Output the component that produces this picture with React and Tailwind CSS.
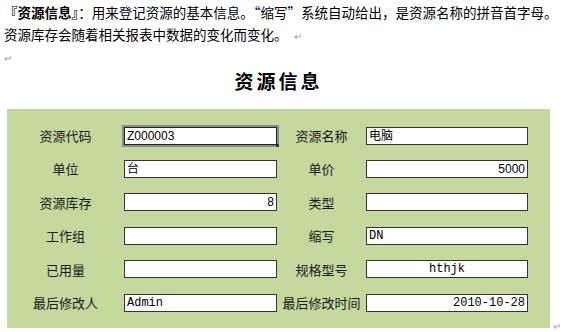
import React from 'react';

const cjk = { fontFamily: '"Noto Sans CJK SC", "Noto Sans", sans-serif' };
const mono = { fontFamily: '"Liberation Mono", "Noto Sans CJK SC", monospace' };

function Field({ value = '', align = 'left', focused = false, font = 'mono' }) {
    const base = focused
        ? 'border border-[#222] outline outline-2 outline-[#8a8a8a] relative'
        : 'border border-[#333]';
    return (
        <div
            className={`h-[18px] bg-white flex items-center px-[2px] text-[12px] text-black leading-none ${base} ${
                align === 'right' ? 'justify-end' : align === 'center' ? 'justify-center' : 'justify-start'
            }`}
            style={font === 'sans' ? { fontFamily: '"Liberation Sans", "Noto Sans CJK SC", sans-serif' } : mono}
        >
            {value}
            {focused && <span className="absolute right-[-3px] bottom-[-3px] w-[3px] h-[3px] bg-[#333]" />}
        </div>
    );
}

const rows = [
    [{ label: '资源代码', value: 'Z000003', focused: true, font: 'sans' }, { label: '资源名称', value: '电脑', font: 'sans' }],
    [{ label: '单位', value: '台', font: 'sans' }, { label: '单价', value: '5000', align: 'right', font: 'sans' }],
    [{ label: '资源库存', value: '8', align: 'right', font: 'sans' }, { label: '类型', value: '' }],
    [{ label: '工作组', value: '' }, { label: '缩写', value: 'DN' }],
    [{ label: '已用量', value: '' }, { label: '规格型号', value: 'hthjk', align: 'center' }],
    [{ label: '最后修改人', value: 'Admin' }, { label: '最后修改时间', value: '2010-10-28', align: 'right' }],
];

export default function App() {
    return (
        <div className="w-[564px] h-[332px] bg-white overflow-hidden text-black" style={cjk}>
            {/* 说明文字 */}
            <div className="pl-[4px] pt-[1px] text-[13.5px] leading-[22px] whitespace-nowrap">
                <p>
                    <span className="font-bold">『资源信息』</span>：用来登记资源的基本信息。“缩写”系统自动给出，是资源名称的拼音首字母。
                </p>
                <p>
                    资源库存会随着相关报表中数据的变化而变化。<span className="text-[10px] text-gray-400 ml-[6px]">↵</span>
                </p>
                <p className="text-[10px] text-gray-400">↵</p>
            </div>

            {/* 标题 */}
            <div className="w-[543px] ml-[7px] text-center text-[19px] font-bold tracking-[3px] leading-[24px]">
                资源信息
            </div>

            <div className="flex items-end">
                {/* 表单面板 */}
                <div className="w-[543px] h-[219px] ml-[7px] mt-[16px] bg-[#c5d89e] pt-[10px]">
                    {rows.map((row, i) => (
                        <div key={i} className="flex items-center h-[33.4px]">
                            <div className="w-[117px] text-center text-[13px] text-[#1a1a1a]">{row[0].label}</div>
                            <div className="w-[153px]">
                                <Field {...row[0]} />
                            </div>
                            <div className="w-[89px] text-center text-[13px] text-[#1a1a1a]">{row[1].label}</div>
                            <div className="w-[162px]">
                                <Field {...row[1]} />
                            </div>
                        </div>
                    ))}
                </div>
                <span className="ml-[3px] mb-[-4px] text-[10px] leading-[12px] text-gray-400">↵</span>
            </div>
        </div>
    );
}
